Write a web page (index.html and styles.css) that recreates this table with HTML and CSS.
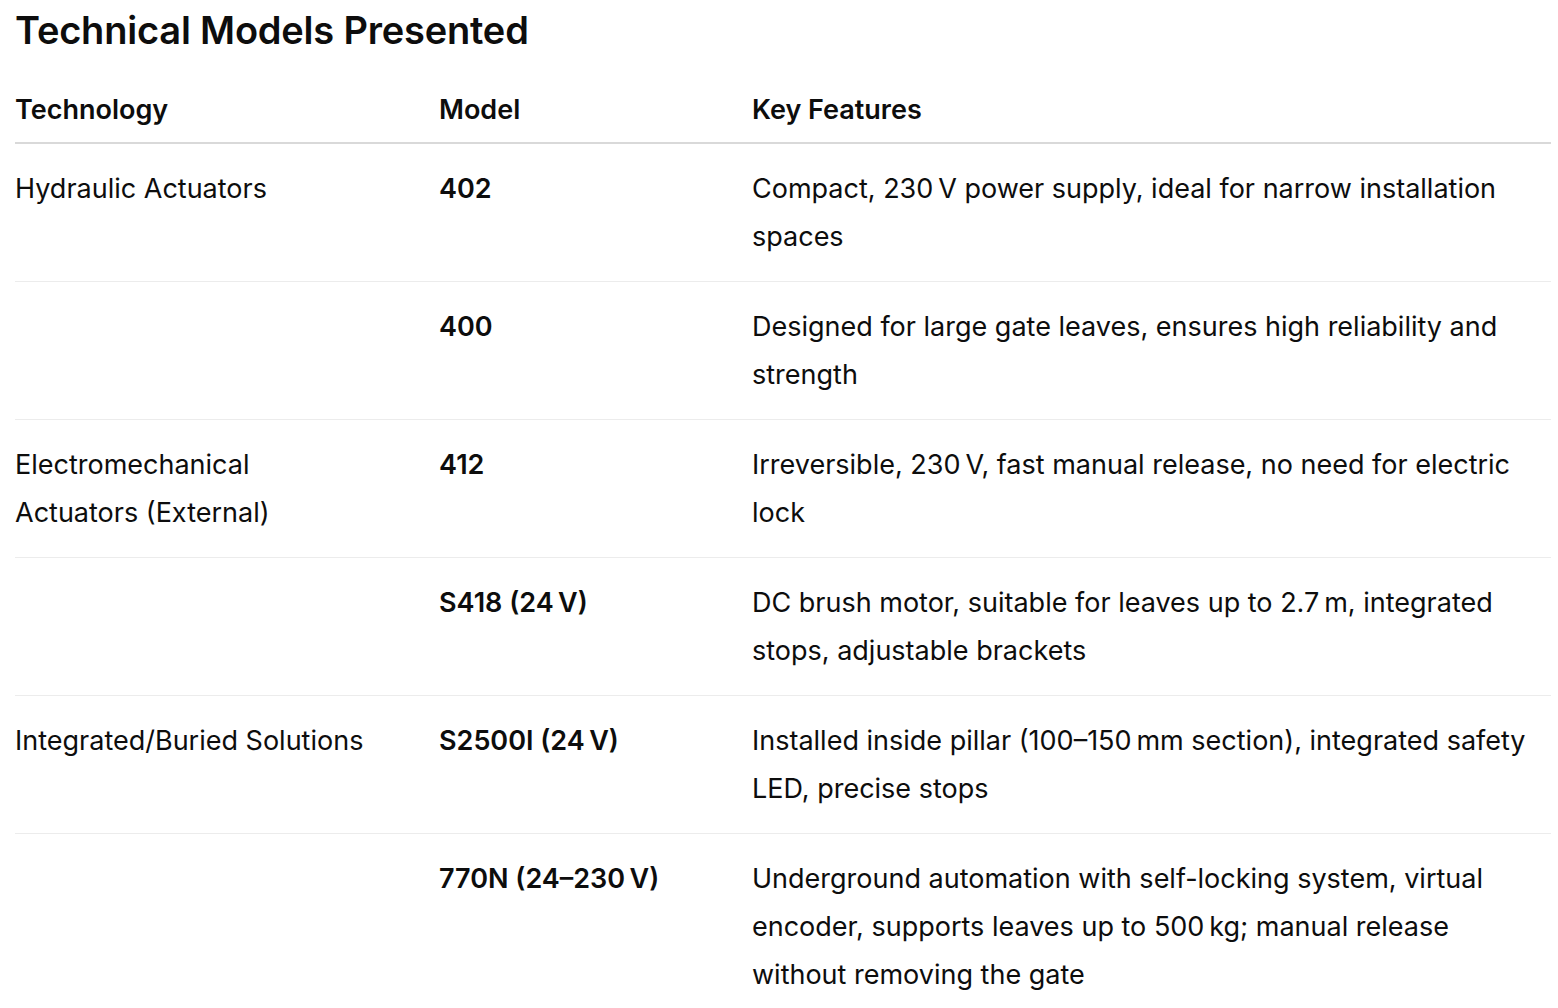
FILE: index.html
```html
<!DOCTYPE html>
<html lang="en">
<head>
<meta charset="utf-8">
<title>Technical Models Presented</title>
<link rel="stylesheet" href="styles.css">
</head>
<body>
<main class="page">
  <h2 class="title">Technical Models Presented</h2>
  <table class="models">
    <colgroup>
      <col class="c-tech">
      <col class="c-model">
      <col class="c-feat">
    </colgroup>
    <thead>
      <tr><th>Technology</th><th>Model</th><th>Key Features</th></tr>
    </thead>
    <tbody>
      <tr>
        <td class="tech">Hydraulic Actuators</td>
        <td class="model">402</td>
        <td>Compact, 230&#8239;V power supply, ideal for narrow installation spaces</td>
      </tr>
      <tr>
        <td class="tech"></td>
        <td class="model">400</td>
        <td>Designed for large gate leaves, ensures high reliability and strength</td>
      </tr>
      <tr>
        <td class="tech">Electromechanical Actuators (External)</td>
        <td class="model">412</td>
        <td>Irreversible, 230&#8239;V, fast manual release, no need for electric lock</td>
      </tr>
      <tr>
        <td class="tech"></td>
        <td class="model">S418 (24&#8239;V)</td>
        <td>DC brush motor, suitable for leaves up to 2.7&#8239;m, integrated stops, adjustable brackets</td>
      </tr>
      <tr>
        <td class="tech">Integrated/Buried Solutions</td>
        <td class="model">S2500I (24&#8239;V)</td>
        <td>Installed inside pillar (100–150&#8239;mm section), integrated safety LED, precise stops</td>
      </tr>
      <tr>
        <td class="tech"></td>
        <td class="model">770N (24–230&#8239;V)</td>
        <td>Underground automation with self-locking system, virtual encoder, supports leaves up to 500&#8239;kg; manual release without removing the gate</td>
      </tr>
    </tbody>
  </table>
</main>
</body>
</html>
```

FILE: styles.css
```css
html, body {
  margin: 0;
  padding: 0;
  background: #ffffff;
}

body {
  font-family: Inter, "Noto Sans", "Liberation Sans", sans-serif;
  color: #0d0d0d;
}

.page {
  padding: 0 7px 0 15px;
}

.title {
  margin: 0;
  padding-top: 8px;
  font-size: 38px;
  line-height: 44px;
  font-weight: 600;
  letter-spacing: -0.2px;
}

.models {
  width: 100%;
  border-collapse: collapse;
  table-layout: fixed;
  margin-top: 34px;
  font-size: 27px;
  line-height: 48px;
}

.c-tech { width: 424px; }
.c-model { width: 313px; }

.models th {
  text-align: left;
  font-weight: 600;
  padding: 0 8px 8px 0;
  border-bottom: 2px solid #d9d9d9;
  vertical-align: top;
}

.models td {
  padding: 21px 8px 20px 0;
  border-bottom: 1px solid #ececec;
  vertical-align: top;
}

.models td.tech {
  padding-right: 64px;
}

.models tbody tr:last-child td {
  border-bottom: none;
}

.models td.model {
  font-weight: 600;
}
```
